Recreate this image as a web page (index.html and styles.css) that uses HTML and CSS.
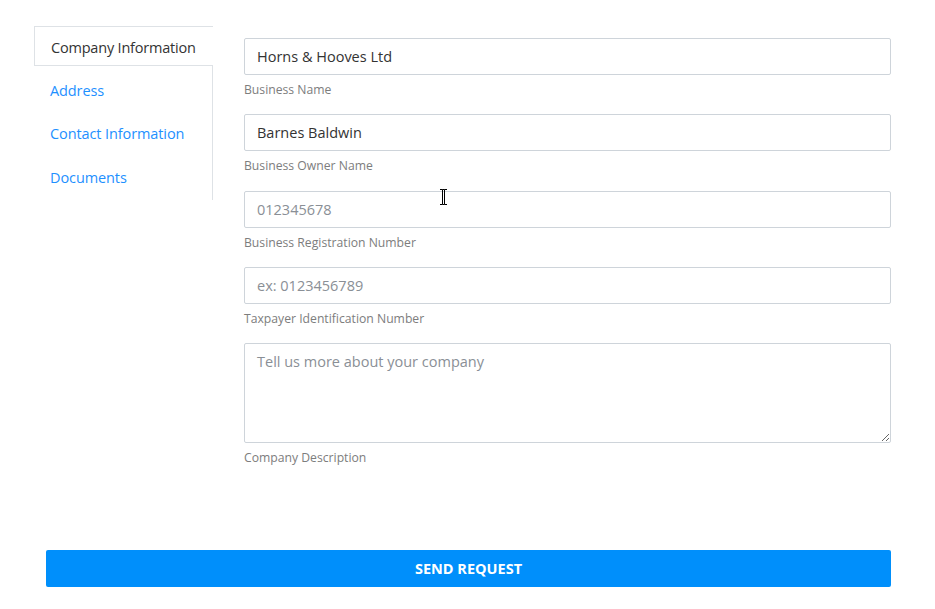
FILE: index.html
```html
<!DOCTYPE html>
<html lang="en">
<head>
  <meta charset="UTF-8">
  <meta name="viewport" content="width=device-width, initial-scale=1.0">
  <title>Company Request</title>
  <link rel="stylesheet" href="styles.css">
</head>
<body>
  <div class="page">
    <div class="top">
      <ul class="tabs">
        <li class="tab active">Company Information</li>
        <li class="tab">Address</li>
        <li class="tab">Contact Information</li>
        <li class="tab">Documents</li>
      </ul>

      <form class="fields">
        <div class="field">
          <input type="text" value="Horns &amp; Hooves Ltd">
          <label>Business Name</label>
        </div>
        <div class="field">
          <input type="text" value="Barnes Baldwin">
          <label>Business Owner Name</label>
        </div>
        <div class="field">
          <input type="text" placeholder="012345678">
          <label>Business Registration Number</label>
          <svg class="cursor" width="9" height="16" viewBox="0 0 9 16">
            <path d="M1 0.5h2.5v15H1M8 0.5H5.5v15H8M3.5 0.5h2M3.5 15.5h2" fill="none" stroke="#000" stroke-width="1"/>
          </svg>
        </div>
        <div class="field">
          <input type="text" placeholder="ex: 0123456789">
          <label>Taxpayer Identification Number</label>
        </div>
        <div class="field">
          <textarea placeholder="Tell us more about your company"></textarea>
          <label>Company Description</label>
        </div>
      </form>
    </div>

    <button class="send" type="button">SEND REQUEST</button>
  </div>
</body>
</html>
```

FILE: styles.css
```css
body {
  margin: 0;
  font-family: 'Open Sans', 'Noto Sans', sans-serif;
  background: #fff;
  color: #333;
}

.page {
  padding: 26px 44px 0 34px;
}

.top {
  display: flex;
  gap: 31px;
}

.tabs {
  list-style: none;
  margin: 0;
  padding: 0;
  width: 179px;
  height: 174px;
  border-right: 1px solid #dee2e6;
  box-sizing: border-box;
  flex-shrink: 0;
}

.tab {
  height: 43.5px;
  line-height: 43.5px;
  padding-left: 16px;
  font-size: 14.5px;
  color: #1e90ff;
  letter-spacing: -0.1px;
  white-space: nowrap;
}

.tab.active {
  box-sizing: border-box;
  height: 40px;
  line-height: 41px;
  color: #333;
  border: 1px solid #dee2e6;
  border-right: none;
  margin-right: -1px;
  margin-bottom: 2.5px;
  background: #fff;
  letter-spacing: -0.2px;
}

.fields {
  flex: 1;
  padding-top: 12px;
}

.field {
  position: relative;
  margin-bottom: 15.25px;
}

.field input,
.field textarea {
  display: block;
  width: 100%;
  box-sizing: border-box;
  border: 1px solid #ced4da;
  border-radius: 2px;
  font-family: inherit;
  font-size: 14.5px;
  color: #333;
  padding: 0 12px;
  outline: none;
}

.field input {
  height: 37px;
}

.field textarea {
  height: 100px;
  padding-top: 8px;
  resize: vertical;
}

.field input::placeholder,
.field textarea::placeholder {
  color: #8a8f96;
}

.field label {
  display: block;
  margin-top: 6px;
  font-size: 12.2px;
  color: #7d7d7d;
  line-height: 18px;
}

.cursor {
  position: absolute;
  left: 195px;
  top: -2px;
}

.send {
  display: block;
  margin: 68px 0 0 12px;
  width: calc(100% - 12px);
  height: 37px;
  border: none;
  border-radius: 2px;
  background: #008ffb;
  color: #fff;
  font-family: inherit;
  font-weight: 700;
  font-size: 14.5px;
}
```
